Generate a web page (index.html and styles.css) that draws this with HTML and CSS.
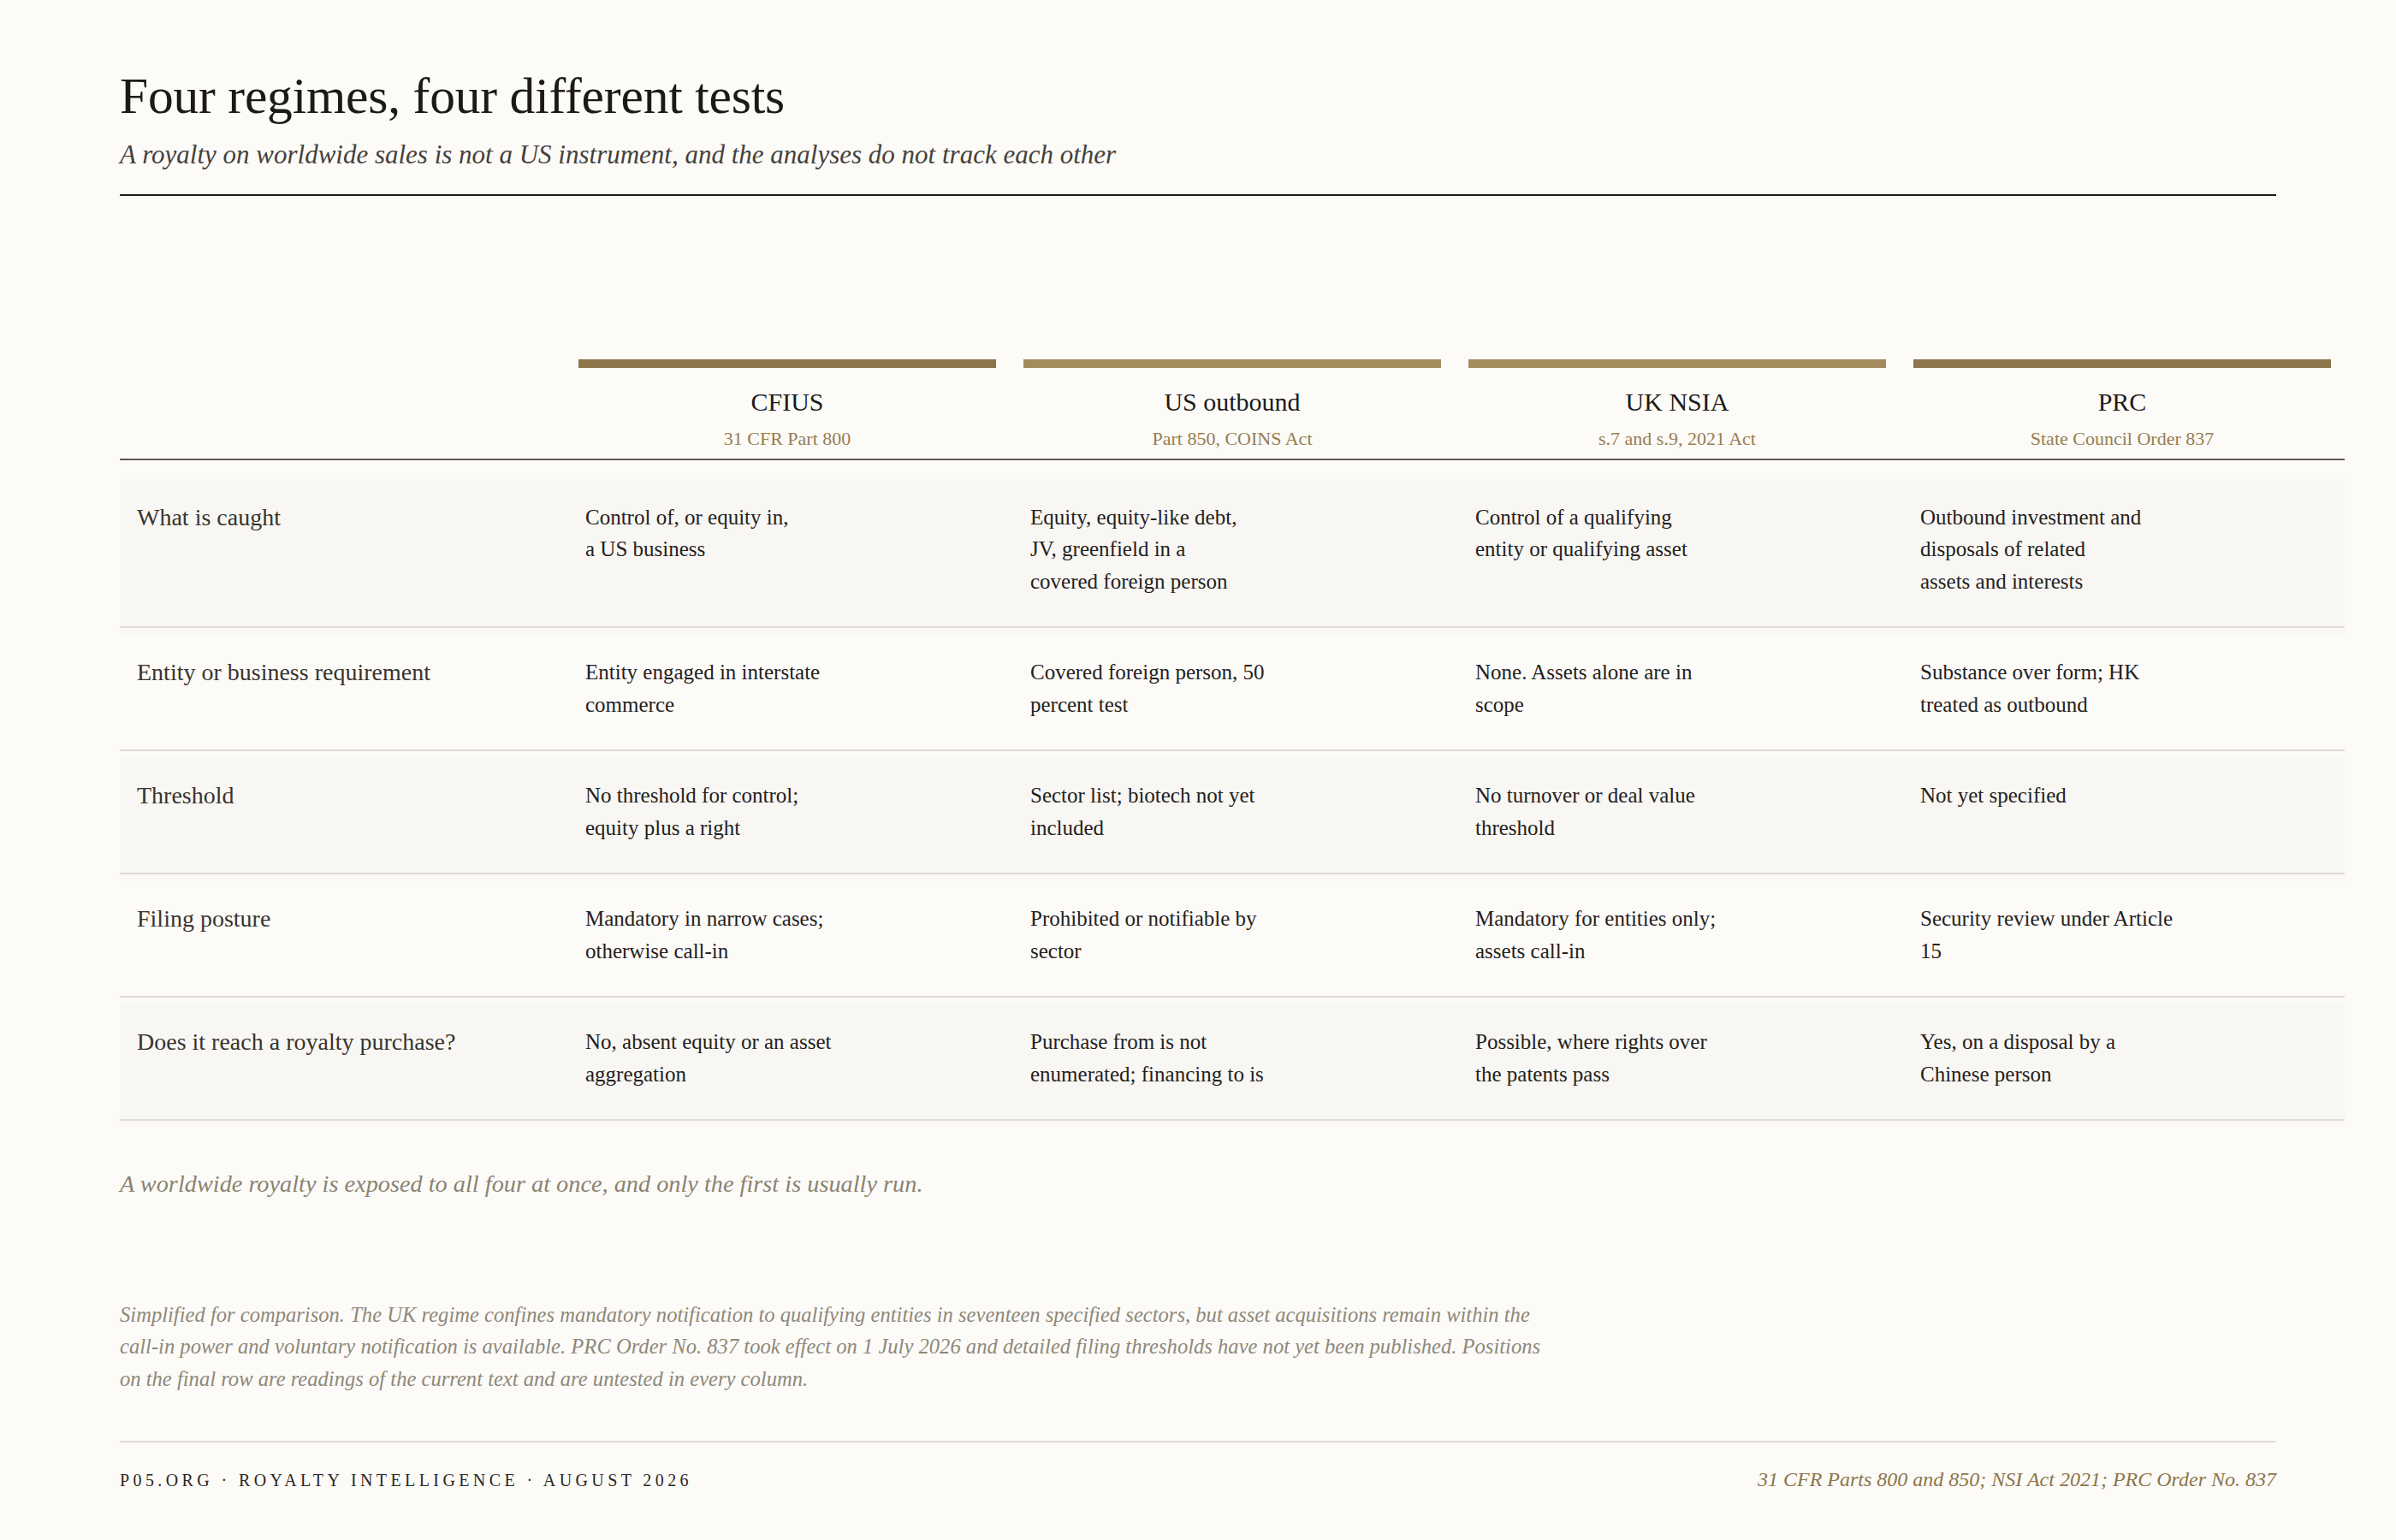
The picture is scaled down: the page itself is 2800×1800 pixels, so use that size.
FILE: index.html
```html
<!DOCTYPE html>
<html lang="en">
<head>
<meta charset="utf-8">
<title>Four regimes, four different tests</title>
<link rel="stylesheet" href="styles.css">
</head>
<body>
<main class="page">
  <header class="masthead">
    <h1 class="title">Four regimes, four different tests</h1>
    <p class="subtitle">A royalty on worldwide sales is not a US instrument, and the analyses do not track each other</p>
  </header>

  <section class="matrix">
    <div class="matrix-head">
      <div class="corner"></div>
      <div class="regime regime-dark">
        <div class="regime-name">CFIUS</div>
        <div class="regime-src">31 CFR Part 800</div>
      </div>
      <div class="regime regime-light">
        <div class="regime-name">US outbound</div>
        <div class="regime-src">Part 850, COINS Act</div>
      </div>
      <div class="regime regime-light">
        <div class="regime-name">UK NSIA</div>
        <div class="regime-src">s.7 and s.9, 2021 Act</div>
      </div>
      <div class="regime regime-dark">
        <div class="regime-name">PRC</div>
        <div class="regime-src">State Council Order 837</div>
      </div>
    </div>

    <div class="row row-shade">
      <div class="label">What is caught</div>
      <div class="cell">Control of, or equity in,<br>a US business</div>
      <div class="cell">Equity, equity-like debt,<br>JV, greenfield in a<br>covered foreign person</div>
      <div class="cell">Control of a qualifying<br>entity or qualifying asset</div>
      <div class="cell">Outbound investment and<br>disposals of related<br>assets and interests</div>
    </div>
    <div class="row">
      <div class="label">Entity or business requirement</div>
      <div class="cell">Entity engaged in interstate<br>commerce</div>
      <div class="cell">Covered foreign person, 50<br>percent test</div>
      <div class="cell">None. Assets alone are in<br>scope</div>
      <div class="cell">Substance over form; HK<br>treated as outbound</div>
    </div>
    <div class="row row-shade">
      <div class="label">Threshold</div>
      <div class="cell">No threshold for control;<br>equity plus a right</div>
      <div class="cell">Sector list; biotech not yet<br>included</div>
      <div class="cell">No turnover or deal value<br>threshold</div>
      <div class="cell">Not yet specified</div>
    </div>
    <div class="row">
      <div class="label">Filing posture</div>
      <div class="cell">Mandatory in narrow cases;<br>otherwise call-in</div>
      <div class="cell">Prohibited or notifiable by<br>sector</div>
      <div class="cell">Mandatory for entities only;<br>assets call-in</div>
      <div class="cell">Security review under Article<br>15</div>
    </div>
    <div class="row row-shade">
      <div class="label">Does it reach a royalty purchase?</div>
      <div class="cell">No, absent equity or an asset<br>aggregation</div>
      <div class="cell">Purchase from is not<br>enumerated; financing to is</div>
      <div class="cell">Possible, where rights over<br>the patents pass</div>
      <div class="cell">Yes, on a disposal by a<br>Chinese person</div>
    </div>
  </section>

  <p class="takeaway">A worldwide royalty is exposed to all four at once, and only the first is usually run.</p>

  <p class="footnote">Simplified for comparison. The UK regime confines mandatory notification to qualifying entities in seventeen specified sectors, but asset acquisitions remain within the<br>call-in power and voluntary notification is available. PRC Order No. 837 took effect on 1 July 2026 and detailed filing thresholds have not yet been published. Positions<br>on the final row are readings of the current text and are untested in every column.</p>

  <footer class="colophon">
    <span class="imprint">P05.ORG · Royalty Intelligence · August 2026</span>
    <span class="sources">31 CFR Parts 800 and 850; NSI Act 2021; PRC Order No. 837</span>
  </footer>
</main>
</body>
</html>
```

FILE: styles.css
```css
html, body {
  margin: 0;
  padding: 0;
  background: #fcfbf8;
}

body {
  font-family: "Liberation Serif", "Times New Roman", serif;
  color: #24211d;
}

.page {
  padding: 77px 140px 0 140px;
  width: 2520px;
}

/* ---------- masthead ---------- */
.masthead {
  border-bottom: 2px solid #1f1d1a;
  padding-bottom: 25px;
}

.title {
  margin: 0;
  font-weight: 400;
  font-size: 59.5px;
  line-height: 1.2;
  color: #1c1a17;
  letter-spacing: -0.2px;
}

.subtitle {
  margin: 13px 0 0 0;
  font-style: italic;
  font-size: 31px;
  line-height: 1.3;
  color: #45413b;
}

/* ---------- matrix ---------- */
.matrix {
  width: 2600px;
  margin-top: 191px;
}

.matrix-head,
.row {
  display: grid;
  grid-template-columns: 504px repeat(4, 488px);
  column-gap: 32px;
  padding-right: 16px;
}

.matrix-head {
  border-bottom: 2px solid #5e5a54;
  padding-bottom: 9px;
  margin-bottom: 22px;
}

.regime {
  border-top: 10px solid #8b7549;
  padding-top: 20px;
  text-align: center;
}

.regime-light {
  border-top-color: #a38b5e;
}

.regime-name {
  font-size: 30px;
  line-height: 39px;
  color: #1d1b18;
}

.regime-src {
  margin-top: 10px;
  font-size: 22px;
  line-height: 28px;
  color: #977d50;
}

.row {
  padding-top: 26px;
  padding-bottom: 34px;
  border-bottom: 2px solid #dfdcd3;
}

.row + .row {
  margin-top: 7px;
}

.row-shade {
  background: #f8f7f3;
  box-shadow: 0 7px 0 0 #f9f8f5;
}

.label {
  padding-left: 20px;
  font-size: 28px;
  line-height: 37.5px;
  color: #38342f;
}

.cell {
  padding-left: 8px;
  font-size: 25px;
  line-height: 37.5px;
  color: #24211d;
}

/* ---------- notes ---------- */
.takeaway {
  margin: 56px 0 0 0;
  font-style: italic;
  font-size: 28.3px;
  line-height: 1.3;
  color: #8a8371;
}

.footnote {
  margin: 115px 0 0 0;
  font-style: italic;
  font-size: 24.6px;
  line-height: 37.5px;
  color: #8e8878;
  white-space: nowrap;
}

/* ---------- footer ---------- */
.colophon {
  margin-top: 54px;
  border-top: 2px solid #e0ddd4;
  padding-top: 30px;
  display: flex;
  justify-content: space-between;
  align-items: baseline;
}

.imprint {
  font-size: 20px;
  letter-spacing: 4.4px;
  text-transform: uppercase;
  color: #2a2724;
}

.sources {
  font-style: italic;
  font-size: 24px;
  color: #8b7549;
}
```
